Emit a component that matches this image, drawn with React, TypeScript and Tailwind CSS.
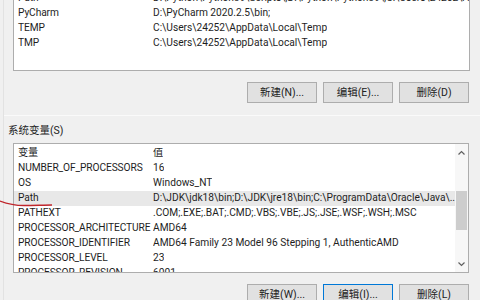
import React from "react";

const font = { fontFamily: 'Roboto, "Noto Sans CJK SC", sans-serif' };

function Btn({ label, focused }: { label: string; focused?: boolean }) {
  return (
    <div
      className={
        "w-[70px] h-[21px] flex items-center justify-center text-[10.5px] text-[#222] bg-[#e1e1e1] border " +
        (focused ? "border-[#0078d7]" : "border-[#adadad]")
      }
    >
      {label}
    </div>
  );
}

function Row({ k, v, sel }: { k: string; v: string; sel?: boolean }) {
  return (
    <div className={"flex h-[15px] items-center text-[10.2px] leading-none text-[#1e1e1e] whitespace-nowrap " + (sel ? "bg-[#e8e8e8]" : "")}>
      <div className="w-[139px] pl-[4px] shrink-0 tracking-[-0.1px]">{k}</div>
      <div className="overflow-hidden">{v}</div>
    </div>
  );
}

export default function App() {
  return (
    <div className="w-[480px] h-[300px] overflow-hidden bg-[#f0f0f0] relative" style={font}>
      <div className="absolute left-[3px] top-0 bottom-0 w-px bg-[#e2e2e2]" />
      {/* user variables box */}
      <div className="ml-[13px] mt-[-10px] w-[457px] h-[81px] border border-[#adadad] bg-white overflow-hidden">
        <Row k="Path" v="D:\Python\Python39\Scripts\;D:\Python\Python39\;C:\Users\24252\AppData\..." />
        <Row k="PyCharm" v="D:\PyCharm 2020.2.5\bin;" />
        <Row k="TEMP" v="C:\Users\24252\AppData\Local\Temp" />
        <Row k="TMP" v="C:\Users\24252\AppData\Local\Temp" />
      </div>
      <div className="flex justify-end gap-[6px] pr-[11px] mt-[11px]">
        <Btn label="新建(N)..." />
        <Btn label="编辑(E)..." />
        <Btn label="删除(D)" />
      </div>
      <div className="mt-[12px] ml-[4px] h-px bg-[#fafafa]" />
      <div className="ml-[8px] mt-[7px] h-[15px] flex items-center text-[10.5px] text-[#222]">系统变量(S)</div>
      {/* system variables box */}
      <div className="ml-[13px] mt-[5px] w-[456px] h-[130px] border border-[#adadad] bg-white overflow-hidden flex">
        <div className="flex-1 pt-[2px] overflow-hidden">
          <Row k="变量" v="值" />
          <Row k="NUMBER_OF_PROCESSORS" v="16" />
          <Row k="OS" v="Windows_NT" />
          <Row sel k="Path" v="D:\JDK\jdk18\bin;D:\JDK\jre18\bin;C:\ProgramData\Oracle\Java\..." />
          <Row k="PATHEXT" v=".COM;.EXE;.BAT;.CMD;.VBS;.VBE;.JS;.JSE;.WSF;.WSH;.MSC" />
          <Row k="PROCESSOR_ARCHITECTURE" v="AMD64" />
          <Row k="PROCESSOR_IDENTIFIER" v="AMD64 Family 23 Model 96 Stepping 1, AuthenticAMD" />
          <Row k="PROCESSOR_LEVEL" v="23" />
          <Row k="PROCESSOR_REVISION" v="6001" />
        </div>
        <div className="w-[13px] bg-[#f7f7f7] flex flex-col items-center">
          <svg width="9" height="14" viewBox="0 0 9 14" className="mt-[2px]">
            <path d="M1.5 8.5 L4.5 5.5 L7.5 8.5" fill="none" stroke="#606060" strokeWidth="1.2" />
          </svg>
          <div className="mt-[31px] w-[11px] h-[39px] bg-[#cdcdcd]" />
          <div className="flex-1" />
          <svg width="9" height="14" viewBox="0 0 9 14" className="mb-[1px]">
            <path d="M1.5 5.5 L4.5 8.5 L7.5 5.5" fill="none" stroke="#606060" strokeWidth="1.2" />
          </svg>
        </div>
      </div>
      <div className="flex justify-end gap-[6px] pr-[11px] mt-[11px]">
        <Btn label="新建(W)..." />
        <Btn label="编辑(I)..." focused />
        <Btn label="删除(L)" />
      </div>
      <svg className="absolute left-0 top-[198px]" width="56" height="12" viewBox="0 0 56 12">
        <path d="M0 3 C 8 6, 14 7.5, 24 7.5 S 44 7, 52 7" fill="none" stroke="#c0262c" strokeWidth="1.3" />
      </svg>
    </div>
  );
}
